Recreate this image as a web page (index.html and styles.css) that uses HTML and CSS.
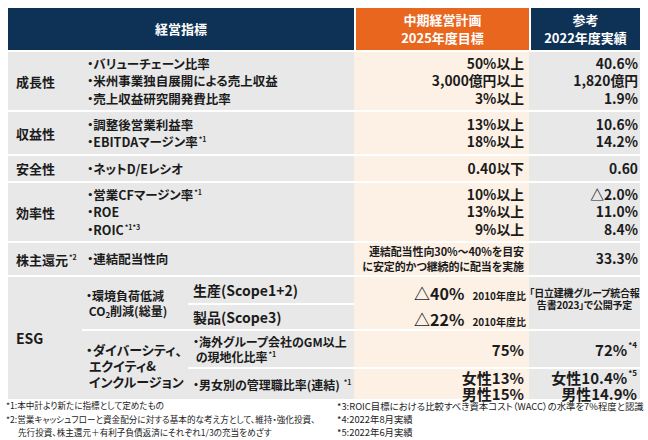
FILE: index.html
```html
<!DOCTYPE html>
<html lang="ja">
<head>
<meta charset="utf-8">
<link rel="stylesheet" href="styles.css">
</head>
<body>
<div class="tbl">
  <div class="h h-main"><div>経営指標</div></div>
  <div class="h h-plan"><div>中期経営計画<br>2025年度目標</div></div>
  <div class="h h-ref"><div>参考<br>2022年度実績</div></div>

  <div class="c cat"><div>成長性</div></div>
  <div class="c ind span2"><div>・バリューチェーン比率<br>・米州事業独自展開による売上収益<br>・売上収益研究開発費比率</div></div>
  <div class="c plan val"><div>50%以上<br>3,000億円以上<br>3%以上</div></div>
  <div class="c ref val"><div>40.6%<br>1,820億円<br>1.9%</div></div>

  <div class="c cat"><div>収益性</div></div>
  <div class="c ind span2"><div>・調整後営業利益率<br>・EBITDAマージン率<span class="sup">*1</span></div></div>
  <div class="c plan val"><div>13%以上<br>18%以上</div></div>
  <div class="c ref val"><div>10.6%<br>14.2%</div></div>

  <div class="c cat"><div>安全性</div></div>
  <div class="c ind span2"><div>・ネットD/Eレシオ</div></div>
  <div class="c plan val"><div>0.40以下</div></div>
  <div class="c ref val"><div>0.60</div></div>

  <div class="c cat"><div>効率性</div></div>
  <div class="c ind span2"><div>・営業CFマージン率<span class="sup">*1</span><br>・ROE<br>・ROIC<span class="sup">*1*3</span></div></div>
  <div class="c plan val"><div>10%以上<br>13%以上<br>9%以上</div></div>
  <div class="c ref val"><div>△2.0%<br>11.0%<br>8.4%</div></div>

  <div class="c cat"><div>株主還元<span class="sup">*2</span></div></div>
  <div class="c ind span2"><div>・連結配当性向</div></div>
  <div class="c plan val small"><div>連結配当性向30%～40%を目安<br>に安定的かつ継続的に配当を実施</div></div>
  <div class="c ref val"><div>33.3%</div></div>

  <div class="c cat esg"><div>ESG</div></div>
  <div class="c sub env"><div>・環境負荷低減<br>&nbsp;CO<sub>2</sub>削減(総量)</div></div>
  <div class="c scope r7"><div>生産(Scope1+2)</div></div>
  <div class="c plan tri r7"><span class="big">△40%</span><span class="base">2010年度比</span></div>
  <div class="c ref pub"><div>「日立建機グループ統合報<br>告書2023」で公開予定</div></div>
  <div class="c scope r8"><div>製品(Scope3)</div></div>
  <div class="c plan tri r8 nb"><span class="big">△22%</span><span class="base">2010年度比</span></div>

  <div class="c sub div"><div>・ダイバーシティ、<br>&nbsp;エクイティ&amp;<br>&nbsp;インクルージョン</div></div>
  <div class="c ind2 r9"><div>・海外グループ会社のGM以上<br>&nbsp;の現地化比率<span class="sup">*1</span></div></div>
  <div class="c plan val mid r9"><div>75%</div></div>
  <div class="c ref val mid r9"><div>72%<span class="sup s2">*4</span></div></div>
  <div class="c ind2 r10"><div>・男女別の管理職比率(連結) <span class="sup">*1</span></div></div>
  <div class="c plan val mid low r10"><div>女性13%<br>男性15%</div></div>
  <div class="c ref val mid low r10"><div>女性10.4%<span class="sup s2">*5</span><br>男性14.9%</div></div>
</div>

<div class="notes">
  <div class="ncol">
    <p>*1:本中計より新たに指標として定めたもの</p>
    <p class="hang">*2:営業キャッシュフローと資金配分に対する基本的な考え方として、維持・強化投資、<br>先行投資、株主還元＋有利子負債返済にそれぞれ1/3の充当をめざす</p>
  </div>
  <div class="ncol right">
    <p>*3:ROIC目標における比較すべき資本コスト（WACC）の水準を7%程度と認識</p>
    <p>*4:2022年8月実績</p>
    <p>*5:2022年6月実績</p>
  </div>
</div>
</body>
</html>
```
FILE: styles.css
```css
html, body {
  margin: 0;
  padding: 0;
  background: #ffffff;
}
body {
  width: 648px;
  height: 440px;
  overflow: hidden;
  font-family: "Noto Sans CJK JP", "Noto Sans", sans-serif;
  font-feature-settings: "palt";
  color: #1b1b1b;
}
.tbl {
  margin: 8px 0 0 8px;
  width: 632px;
  display: grid;
  grid-template-columns: 74px 106px 166px 175px 111px;
  grid-template-rows: 42px 60px 44px 27px 60px 34px 28px 26px 38px 32px;
}
.h {
  background: #0e3156;
  color: #ffffff;
  font-weight: 700;
  font-size: 13px;
  line-height: 18px;
  display: flex;
  align-items: center;
  justify-content: center;
  text-align: center;
}
.h-main { grid-column: 1 / 4; }
.h-plan { background: #e9661e; border-left: 2px solid #fff; }
.h-ref { border-left: 2px solid #fff; }

.c {
  box-sizing: border-box;
  border-top: 2px solid #ffffff;
  background: #e8e8e8;
  font-weight: 700;
  display: flex;
  flex-direction: column;
  justify-content: center;
}
.c.nb { border-top: 0; }
.plan { background: #fdf1e6; }
.cat {
  font-size: 13px;
  padding-left: 8px;
}
.ind {
  font-size: 12.5px;
  line-height: 17.5px;
  padding-left: 5px;
}
.span2 { grid-column: 2 / 4; }
.val {
  text-align: right;
  font-size: 13.8px;
  line-height: 17.5px;
}
.plan.val { padding-right: 5px; }
.ref.val { padding-right: 2px; }
.val.small {
  font-size: 11px;
  line-height: 15px;
  letter-spacing: -0.1px;
}

.esg {
  grid-column: 1;
  grid-row: 7 / 11;
  font-size: 14px;
}
.sub {
  grid-column: 2;
  padding-left: 4px;
}
.env {
  grid-row: 7 / 9;
  font-size: 12px;
  line-height: 15px;
}
.div {
  grid-row: 9 / 11;
  font-size: 13px;
  line-height: 16px;
  padding-top: 2px;
}
.env sub {
  font-size: 8px;
  line-height: 0;
  vertical-align: -2px;
}
.scope {
  grid-column: 3;
  font-size: 14px;
  padding-left: 5px;
}
.r7 { grid-row: 7; }
.r8 { grid-row: 8; }
.r9 { grid-row: 9; }
.r10 { grid-row: 10; }
.tri {
  grid-column: 4;
  flex-direction: row;
  justify-content: flex-end;
  align-items: baseline;
  padding-right: 3px;
  padding-top: 4px;
}
.tri .big {
  font-size: 16px;
  margin-right: 8px;
}
.tri .base { font-size: 10px; }
.pub {
  grid-column: 5;
  grid-row: 7 / 9;
  font-size: 10px;
  line-height: 12px;
  text-align: center;
  white-space: nowrap;
  letter-spacing: -0.2px;
  padding-bottom: 8px;
}
.ind2 {
  grid-column: 3;
  font-size: 12px;
  line-height: 15px;
  padding-left: 5px;
}
.val.mid {
  font-size: 15px;
  line-height: 17px;
}
.val.low {
  line-height: 16px;
  padding-top: 3px;
}
.ref.mid { padding-right: 3px; }
.sup {
  font-size: 7px;
  line-height: 0;
  vertical-align: 5px;
  margin-left: 1px;
}
.sup.s2 {
  font-size: 8px;
  vertical-align: 8px;
}

.notes {
  display: flex;
  line-height: 13.5px;
  font-weight: 400;
  color: #222;
}
.ncol { width: 330px; padding-left: 6px; font-size: 8.6px; }
.ncol.right { width: auto; padding-left: 1px; padding-top: 1px; line-height: 13px; white-space: nowrap; font-size: 9.4px; }
.notes p { margin: 0; }
.hang { padding-left: 12px; text-indent: -12px; }
```
